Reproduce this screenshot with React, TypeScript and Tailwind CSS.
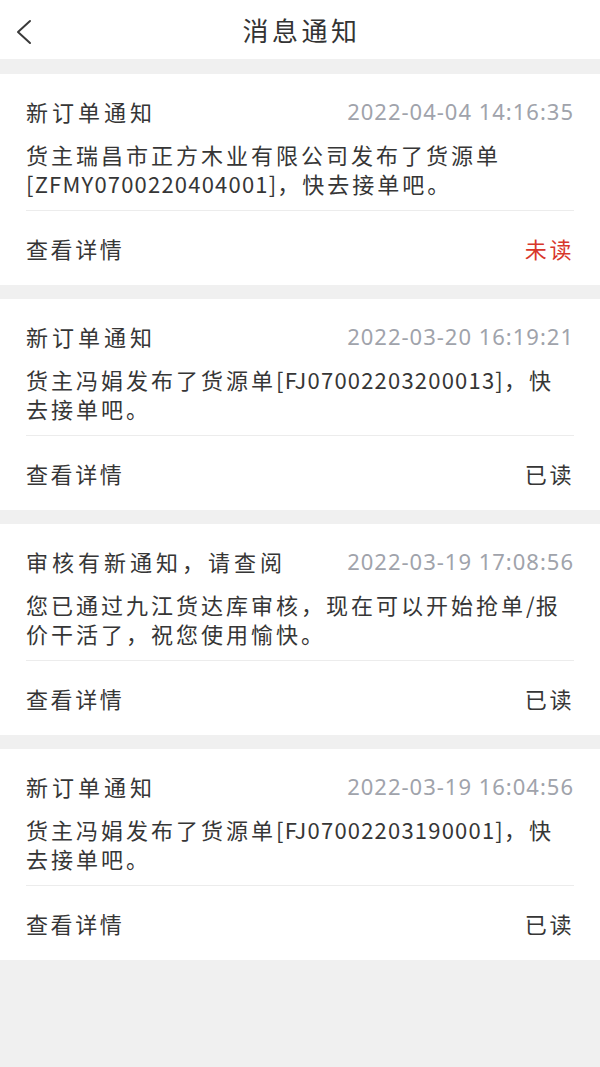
const font = { fontFamily: '"Noto Sans CJK SC", "Noto Sans", sans-serif' };

type Notice = {
  title: string;
  time: string;
  body: string;
  unread: boolean;
};

const notices: Notice[] = [
  {
    title: "新订单通知",
    time: "2022-04-04 14:16:35",
    body: "货主瑞昌市正方木业有限公司发布了货源单[ZFMY0700220404001]，快去接单吧。",
    unread: true,
  },
  {
    title: "新订单通知",
    time: "2022-03-20 16:19:21",
    body: "货主冯娟发布了货源单[FJ07002203200013]，快去接单吧。",
    unread: false,
  },
  {
    title: "审核有新通知，请查阅",
    time: "2022-03-19 17:08:56",
    body: "您已通过九江货达库审核，现在可以开始抢单/报价干活了，祝您使用愉快。",
    unread: false,
  },
  {
    title: "新订单通知",
    time: "2022-03-19 16:04:56",
    body: "货主冯娟发布了货源单[FJ07002203190001]，快去接单吧。",
    unread: false,
  },
];

// latin runs sit tighter, only the chinese glyphs get the wide spacing
function Body({ text }: { text: string }) {
  const parts = text.split(/([\x00-\x7F]+)/);
  return (
    <>
      {parts.map((p, i) =>
        i % 2 ? (
          <span key={i} className="tracking-[1.2px]">
            {p}
          </span>
        ) : (
          <span key={i}>{p}</span>
        )
      )}
    </>
  );
}

function NoticeCard({ n }: { n: Notice }) {
  return (
    <div className="bg-white px-[26px] pt-[22px]">
      <div className="flex h-[30px] items-center justify-between">
        <span className="text-[22px] tracking-[4px] text-[#363636]">{n.title}</span>
        <span
          className="text-[22px] tracking-[1px] text-[#a0a3ab]"
          style={{ fontFamily: '"Noto Sans", sans-serif' }}
        >
          {n.time}
        </span>
      </div>
      <p className="mt-[14px] pb-[12px] text-[22px] leading-[29px] tracking-[3px] text-[#363636]">
        <Body text={n.body} />
      </p>
      <div className="h-px bg-[#ececec]" />
      <div className="flex h-[74px] items-center justify-between">
        <span className="text-[22px] tracking-[2.6px] text-[#363636]">查看详情</span>
        <span className={`text-[22px] tracking-[2.6px] ${n.unread ? "text-[#d8372b]" : "text-[#363636]"}`}>
          {n.unread ? "未读" : "已读"}
        </span>
      </div>
    </div>
  );
}

export default function App() {
  return (
    <div className="min-h-[1067px] w-[600px] bg-[#f0f0f0]" style={font}>
      <header className="relative flex h-[59px] items-center justify-center bg-white">
        <svg
          className="absolute left-[14px] top-[18px]"
          width="22"
          height="28"
          viewBox="0 0 22 28"
          fill="none"
          stroke="#3a3a3a"
          strokeWidth="2"
          strokeLinecap="round"
          strokeLinejoin="round"
        >
          <polyline points="16,3 4,14 16,25" />
        </svg>
        <h1 className="pl-[3px] text-[26px] tracking-[3.5px] text-[#333]">消息通知</h1>
      </header>
      <div className="flex flex-col gap-[14px] pt-[15px]">
        {notices.map((n, i) => (
          <NoticeCard key={i} n={n} />
        ))}
      </div>
    </div>
  );
}
